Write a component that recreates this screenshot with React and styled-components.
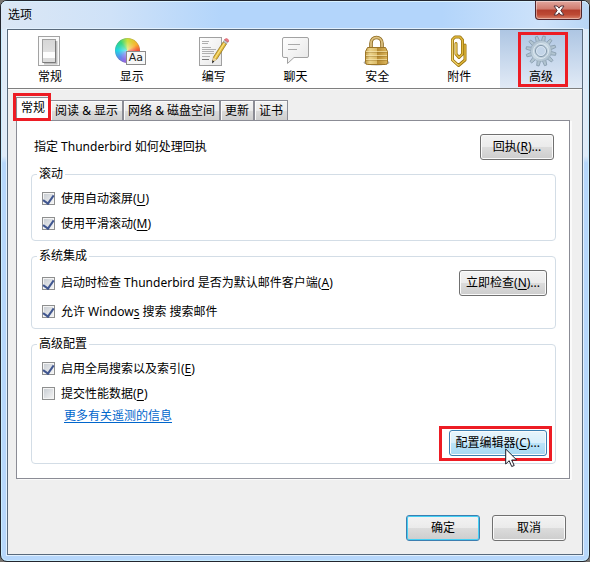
import React, { useState } from 'react'
import styled, { createGlobalStyle, css } from 'styled-components'

const TOOLS = [
    { id: 'general', label: '常规', Icon: SwitchIcon },
    { id: 'display', label: '显示', Icon: DisplayIcon },
    { id: 'compose', label: '编写', Icon: ComposeIcon },
    { id: 'chat', label: '聊天', Icon: ChatIcon },
    { id: 'security', label: '安全', Icon: LockIcon },
    { id: 'attachments', label: '附件', Icon: ClipIcon },
    { id: 'advanced', label: '高级', Icon: GearIcon, marked: true },
]

const TABS = ['常规', '阅读 & 显示', '网络 & 磁盘空间', '更新', '证书']

function Check({ checked, children }) {
    return (
        <CheckLabel>
            <CheckBox type="checkbox" defaultChecked={checked} />
            <span>{children}</span>
        </CheckLabel>
    )
}

export default function App() {
    const [tool, setTool] = useState('advanced')
    const [tab, setTab] = useState('常规')

    return (
        <>
            <GlobalStyle />
            <Frame>
                <TitleBar>
                    <Title>选项</Title>
                    <CloseButton type="button" aria-label="关闭">
                        <CloseIcon />
                    </CloseButton>
                </TitleBar>
                <Client>
                    <Toolbar>
                        {TOOLS.map(({ id, label, Icon, marked }) => (
                            <ToolButton key={id} type="button" $active={id === tool} onClick={() => setTool(id)}>
                                <Icon />
                                <span>{label}</span>
                                {marked && <Mark $inset="2px 14px 1px 18px" />}
                            </ToolButton>
                        ))}
                    </Toolbar>

                    <TabList role="tablist">
                        {TABS.map(name => (
                            <Tab key={name} type="button" role="tab" aria-selected={name === tab} $active={name === tab} onClick={() => setTab(name)}>
                                {name}
                                {name === '常规' && <Mark $inset="-5px -2px -1px -4px" />}
                            </Tab>
                        ))}
                    </TabList>

                    <Panel role="tabpanel">
                        <ReceiptRow>
                            <span>指定 Thunderbird 如何处理回执</span>
                            <Button type="button">回执(<u>R</u>)...</Button>
                        </ReceiptRow>

                        <Group>
                            <Legend>滚动</Legend>
                            <Check checked>使用自动滚屏(<u>U</u>)</Check>
                            <Check checked>使用平滑滚动(<u>M</u>)</Check>
                        </Group>

                        <Group>
                            <Legend>系统集成</Legend>
                            <SplitRow>
                                <Check checked>启动时检查 Thunderbird 是否为默认邮件客户端(<u>A</u>)</Check>
                                <Button type="button">立即检查(<u>N</u>)...</Button>
                            </SplitRow>
                            <Check checked>允许 Window<u>s</u> 搜索 搜索邮件</Check>
                        </Group>

                        <Group>
                            <Legend>高级配置</Legend>
                            <Check checked>启用全局搜索以及索引(<u>E</u>)</Check>
                            <Check>提交性能数据(<u>P</u>)</Check>
                            <LinkRow>
                                <a href="#telemetry">更多有关遥测的信息</a>
                            </LinkRow>
                            <EditorRow>
                                <Button type="button" $variant="hot">
                                    配置编辑器(<u>C</u>)...
                                    <Mark $inset="-5px -6px -6px -11px" />
                                    <Pointer />
                                </Button>
                            </EditorRow>
                        </Group>
                    </Panel>

                    <Footer>
                        <Button type="button" $variant="default">确定</Button>
                        <Button type="button">取消</Button>
                    </Footer>
                </Client>
            </Frame>
        </>
    )
}

/* ---------- icons ---------- */

function CloseIcon() {
    return (
        <svg width="12" height="11" viewBox="0 0 12 11">
            <path d="M1 1h3.200L6 3.200 7.800 1H11L7.800 5.500 11 10H7.800L6 7.800 4.200 10H1l3.200-4.500z" fill="#fff" stroke="#54353c" strokeWidth="1" />
        </svg>
    )
}

function SwitchIcon() {
    return (
        <svg width="32" height="32" viewBox="0 0 32 32">
            <defs>
                <linearGradient id="sw" x1="0" y1="0" x2="0" y2="1">
                    <stop offset="0" stopColor="#d6d6d6" />
                    <stop offset="1" stopColor="#e8e8e8" />
                </linearGradient>
            </defs>
            <rect x="4.500" y="1.500" width="21" height="29" fill="#fafafa" stroke="#a3a3a3" />
            <path d="M10 28.500h12.500V6" fill="none" stroke="#bdbdbd" strokeWidth="2" />
            <rect x="8.500" y="4.500" width="13" height="23" fill="url(#sw)" stroke="#a0a0a0" />
            <rect x="9" y="17" width="12" height="6" fill="#fdfdfd" />
            <rect x="9" y="23" width="12" height="4" fill="#dcdcdc" />
            <path d="M9 27.500h12.500V6" fill="none" stroke="#7a7a7a" />
        </svg>
    )
}

function DisplayIcon() {
    return (
        <Wheel>
            <WheelLabel>Aa</WheelLabel>
        </Wheel>
    )
}

function ComposeIcon() {
    return (
        <svg width="32" height="32" viewBox="0 0 32 32">
            <defs>
                <linearGradient id="paper" x1="0" y1="0" x2="1" y2="1">
                    <stop offset="0" stopColor="#fff" />
                    <stop offset="1" stopColor="#e7e7e7" />
                </linearGradient>
            </defs>
            <rect x="1.500" y="2.500" width="22" height="28" fill="url(#paper)" stroke="#a0a0a0" />
            <path d="M4 6.500h7M4 8.500h6M4 12.500h9M4 14.500h14M4 16.500h12M4 18.500h12M4 21.500h8" stroke="#b0b0b0" />
            <path d="M4 24.500h7" stroke="#777" />
            <path d="M14.600 26.500l.9-4.500L25.300 6.800l3.200 2.100-9.700 15.300z" fill="#e5bd3c" stroke="#8a6a17" strokeWidth=".7" />
            <path d="M17 23L26.700 7.800" stroke="#fae38a" strokeWidth="1.100" />
            <path d="M14.500 27l.9-4.500 3.200 2z" fill="#edd5a0" />
            <path d="M14 28.500l.4-3.200 2.100 1.300z" fill="#292929" />
            <path d="M25.300 6.800l1.300-2.100 3.200 2.100-1.300 2.100z" fill="#c4c8cc" stroke="#85898c" strokeWidth=".5" />
            <path d="M26.600 4.700c1.500-2.500 5.200 0 3.500 2.400z" fill="#ee7f87" stroke="#d4535f" strokeWidth=".8" />
        </svg>
    )
}

function ChatIcon() {
    return (
        <svg width="32" height="32" viewBox="0 0 32 32">
            <defs>
                <linearGradient id="bubble" x1="0" y1="0" x2="1" y2="1">
                    <stop offset="0" stopColor="#fff" />
                    <stop offset="1" stopColor="#e6e6e6" />
                </linearGradient>
            </defs>
            <path d="M4 2.500h23q1.500 0 1.500 1.500v17q0 1.500-1.500 1.500H14L7.500 28.500v-6H4Q2.500 22.500 2.500 21V4Q2.500 2.500 4 2.500z" fill="url(#bubble)" stroke="#a2a2a2" />
            <path d="M8 9.500h12M8 14.500h9" stroke="#aaa" />
        </svg>
    )
}

function LockIcon() {
    return (
        <svg width="32" height="32" viewBox="0 0 32 32">
            <defs>
                <linearGradient id="brass" x1="0" y1="0" x2="1" y2="0">
                    <stop offset="0" stopColor="#c39d48" />
                    <stop offset=".2" stopColor="#ecd48c" />
                    <stop offset=".5" stopColor="#dcbc69" />
                    <stop offset=".52" stopColor="#b58a32" />
                    <stop offset="1" stopColor="#dcb65c" />
                </linearGradient>
            </defs>
            <ellipse cx="15.500" cy="27.500" rx="13" ry="3" fill="#777" opacity=".55" />
            <path d="M10 14V8.500c0-8 11-8 11 0V14" fill="none" stroke="#8d6a1e" strokeWidth="3.600" />
            <path d="M10 14V8.500c0-8 11-8 11 0V14" fill="none" stroke="#dcc080" strokeWidth="1.800" />
            <path d="M6.500 12.500h18l2 4v11q0 2-2 2h-18q-2 0-2-2v-11z" fill="url(#brass)" stroke="#9c7527" />
            <path d="M5 16.500h21M5 20.500h21M5 24.500h21" stroke="#f8e7ae" opacity=".7" />
            <path d="M5 17.500h21M5 21.500h21M5 25.500h21" stroke="#80590e" opacity=".3" />
        </svg>
    )
}

function ClipIcon() {
    return (
        <svg width="32" height="32" viewBox="0 0 32 32" fill="none" strokeLinejoin="round" strokeLinecap="round">
            <path d="M13 8.500V19l3 3.500 3.500-3.500V5l-2.500-3h-5L9.500 4.500V25l6 5.500 6.500-5.500V10" stroke="#96700e" strokeWidth="3" />
            <path d="M13 8.500V19l3 3.500 3.500-3.500V5l-2.500-3h-5L9.500 4.500V25l6 5.500 6.500-5.500V10" stroke="#e0b83c" strokeWidth="1.500" />
            <path d="M9.300 5v20l5.700 5M12.800 9v10" stroke="#f8e69a" strokeWidth=".7" />
        </svg>
    )
}

function GearIcon() {
    const teeth = Array.from({ length: 12 }, (_, i) => i * 30 + 12)
    return (
        <svg width="32" height="32" viewBox="0 0 32 32">
            <defs>
                <linearGradient id="steel" x1="0" y1="0" x2="1" y2="1">
                    <stop offset="0" stopColor="#a5b8c8" />
                    <stop offset=".5" stopColor="#cadae5" />
                    <stop offset="1" stopColor="#a3b7c6" />
                </linearGradient>
            </defs>
            <g stroke="#8196a8" strokeWidth=".7" fill="#b1c4d1">
                {teeth.map(a => (
                    <path key={a} d="M14.200 6.500l.6-5.600h2.400l.6 5.600z" transform={`rotate(${a} 16 16)`} />
                ))}
            </g>
            <circle cx="16" cy="16" r="10.500" fill="url(#steel)" stroke="#8fa3b3" strokeWidth=".5" />
            <circle cx="16" cy="16" r="7.500" fill="none" stroke="#dbe7ef" strokeWidth="1" />
            <circle cx="16" cy="16" r="5.500" fill="#c3d5e8" stroke="#8297a9" />
            <circle cx="16" cy="16" r="4.500" fill="none" stroke="#dde9f2" strokeWidth=".8" />
        </svg>
    )
}

function Pointer() {
    return (
        <PointerSvg width="13" height="20" viewBox="0 0 13 20">
            <path d="M.7 1v15l3.500-3.300L6.700 18.500l2.500-1-2.500-5.500h5z" fill="#fff" stroke="#1c1c28" />
        </PointerSvg>
    )
}

/* ---------- styles ---------- */

const GlobalStyle = createGlobalStyle`
* {
    box-sizing: border-box;
}
body {
    margin: 0;
    background: #77736f;
    color: #000;
    font: 12px/16px "Noto Sans", "Noto Sans CJK SC", sans-serif;
}
button, input {
    font: inherit;
    color: inherit;
}
u {
    text-underline-offset: 2px;
}
`

const Frame = styled.div`
display: flex;
flex-direction: column;
min-height: 100vh;
padding: 0 6px 6px;
border: 1px solid #23262e;
border-radius: 7px;
box-shadow: inset 0 0 0 1px #c9edff;
background: linear-gradient(#dfebf8 0, #dfebf8 155px, #b7d7fb 162px);
`

const TitleBar = styled.header`
display: flex;
justify-content: space-between;
height: 28px;
margin: 0 -6px;
padding: 0 7px 0 6px;
border-radius: 6px 6px 0 0;
background: linear-gradient(90deg, #dbe7f5 0, #cfe2f8 110px, #b3d5fb 220px, #b3d5fb 75%, #cde2fa 92%, #b9d6f5);
box-shadow: inset 0 1px 0 #d8f1ff;
`

const Title = styled.h1`
margin: 0;
padding: 6px 1px;
font-size: 12px;
font-weight: 400;
line-height: 16px;
`

const CloseButton = styled.button`
display: flex;
align-items: center;
justify-content: center;
width: 47px;
height: 19px;
padding: 0;
border: 1px solid #50252c;
border-top: 0;
border-radius: 0 0 4px 4px;
background: linear-gradient(#e2a79e 0, #cf7a6d 45%, #b33d2c 50%, #bd4a35 75%, #d98069);
box-shadow: inset 0 0 0 1px rgba(255,255,255,.4);
`

const Client = styled.main`
display: flex;
flex: 1;
flex-direction: column;
border: 1px solid #596a7c;
box-shadow: 0 0 0 1px #e2f0fd;
background: #efefef;
`

const Toolbar = styled.nav`
display: flex;
padding-left: 1px;
border-bottom: 1px solid #7f7f7f;
background: #fff;
box-shadow: 0 1px 0 #fafafa;
`

const ToolButton = styled.button`
position: relative;
display: flex;
flex: 1;
flex-direction: column;
align-items: center;
gap: 2px;
height: 58px;
padding: 5px 0 0;
border: 0;
background: ${props => props.$active ? 'linear-gradient(#aec6e3, #e1eaf6)' : 'transparent'};
`

/* red frame laid over a control */
const Mark = styled.span`
position: absolute;
inset: ${props => props.$inset};
border: 3px solid #ed1c24;
pointer-events: none;
`

const Wheel = styled.span`
position: relative;
width: 32px;
height: 32px;

&::before {
    content: "";
    position: absolute;
    left: -1px;
    top: 3px;
    width: 25px;
    height: 25px;
    border-radius: 50%;
    background:
        radial-gradient(rgba(255,255,255,.5), transparent 55%),
        conic-gradient(#c9e03c, #f9b32f 55deg, #f2453d 95deg, #e33fb0 140deg, #9a67e4 190deg, #5a8cee 230deg, #1fd6e4 270deg, #35d67d 320deg, #c9e03c);
    box-shadow: inset 0 0 1px #555;
}
`

const WheelLabel = styled.span`
position: absolute;
left: 10px;
top: 16px;
width: 20px;
height: 14px;
border: 1px solid #8b8b8b;
background: #f7f7f7;
color: #222;
font: 11px/12px "DejaVu Sans", sans-serif;
text-align: center;
`

const TabList = styled.div`
display: flex;
align-items: flex-end;
padding: 8px 8px 0;
`

const Tab = styled.button`
position: relative;
height: 20px;
padding: 0 4px;
border: 1px solid #8b8c95;
border-bottom: 0;
background: linear-gradient(#f3f3f3 0, #ebebeb 50%, #dcdcdc 52%, #cecece);
box-shadow: inset 1px 1px 0 #fbfbfb;
line-height: 18px;
white-space: nowrap;

${props => props.$active && css`
    z-index: 1;
    height: 23px;
    padding-bottom: 3px;
    background: #fff;
`}
`

const Panel = styled.section`
display: flex;
flex-direction: column;
gap: 7px;
margin: 0 12px 0 8px;
padding: 13px 13px 14px 14px;
border: 1px solid #8b8c95;
background: #fff;
box-shadow: 2px 1px 0 #fafafa;
`

const Row = styled.div`
display: flex;
align-items: center;
justify-content: space-between;
`

const ReceiptRow = styled(Row)`
padding: 0 2px 0 3px;
margin-bottom: -1px;
`

const SplitRow = styled(Row)`
padding: 2px 0 3px;
`

const Group = styled.fieldset`
min-width: 0;
margin: 0;
padding: 4px 8px 4px 10px;
border: 1px solid #d3dde6;
border-radius: 4px;
`

const Legend = styled.legend`
margin-left: -5px;
padding: 0 2px;
line-height: 16px;
`

const CheckLabel = styled.label`
display: flex;
align-items: center;
gap: 6px;
height: 25px;
`

const CheckBox = styled.input`
appearance: none;
display: flex;
justify-content: center;
width: 13px;
height: 13px;
margin: 0;
border: 1px solid #8e8f8f;
background: linear-gradient(135deg, #c5cad0, #f6f6f6);
box-shadow: inset 0 0 0 1px #f4f4f4;

&:checked::after {
    content: "";
    width: 5px;
    height: 9px;
    border: solid #40568f;
    border-width: 0 2px 2px 0;
    transform: rotate(35deg);
}
`

const LinkRow = styled.div`
padding: 2px 0 3px 22px;

a {
    color: #0066cc;
    text-underline-offset: 2px;
}
`

const EditorRow = styled.div`
display: flex;
justify-content: flex-end;
padding: 3px 0;
`

const Button = styled.button`
position: relative;
min-width: 74px;
height: 26px;
padding: 0 6px;
border: 1px solid #707070;
border-radius: 3px;
background: linear-gradient(#f3f3f3 0, #ebebeb 48%, #dcdcdc 50%, #cdcdcd);
background-clip: padding-box;
box-shadow: inset 0 0 0 1px #fafafa;
line-height: 24px;
white-space: nowrap;

${props => props.$variant === 'hot' && css`
    border-color: #3c7fb1;
    background: linear-gradient(#e8f5fc 0, #d8effb 48%, #bce4f9 50%, #a6d8f2);
`}

${props => props.$variant === 'default' && css`
    border-color: #3c7fb1;
    box-shadow: inset 0 0 0 1px #45d0f4;
`}
`

const PointerSvg = styled.svg`
position: absolute;
left: 55px;
top: 17px;
`

const Footer = styled.footer`
display: flex;
justify-content: flex-end;
gap: 12px;
padding: 36px 16px 12px;
`
